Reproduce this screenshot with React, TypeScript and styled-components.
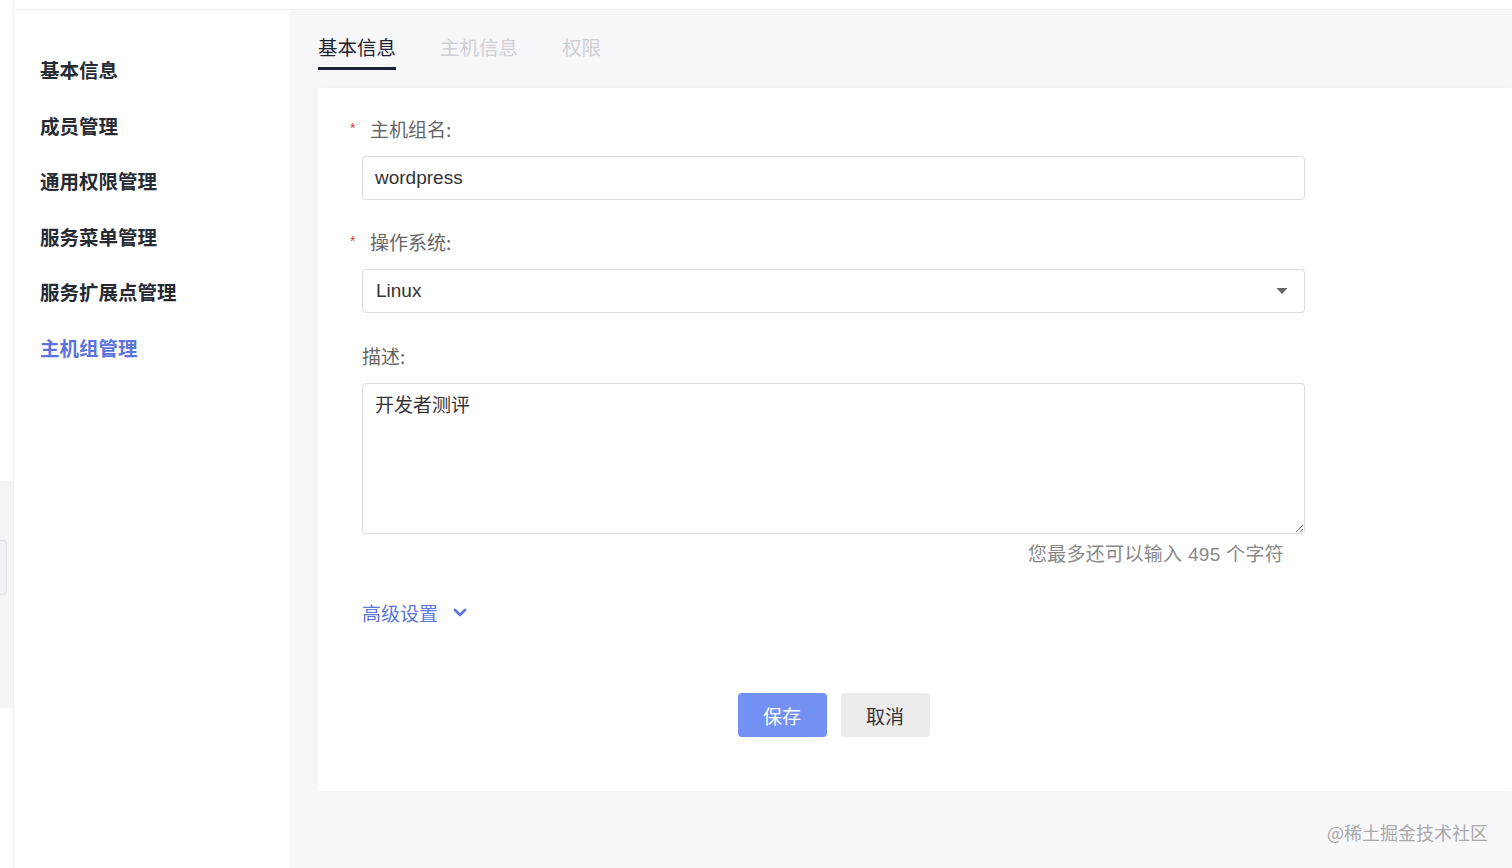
import React, { useState } from 'react';
import styled, { createGlobalStyle, css } from 'styled-components';

const GlobalStyle = createGlobalStyle`
  html, body {
    margin: 0;
    padding: 0;
    height: 100%;
  }
  body {
    font-family: "Liberation Sans", "Noto Sans CJK SC", sans-serif;
    background: #fff;
    color: #333;
  }
  * {
    box-sizing: border-box;
  }
`;

const menuItems = ['基本信息', '成员管理', '通用权限管理', '服务菜单管理', '服务扩展点管理', '主机组管理'];
const tabs = ['基本信息', '主机信息', '权限'];

export default function App() {
  const [desc, setDesc] = useState('开发者测评');

  return (
    <>
      <GlobalStyle />
      <Page>
        <EdgeStrip>
          <EdgeTop />
          <EdgeGrey>
            <EdgeHandle />
          </EdgeGrey>
        </EdgeStrip>
        <Body>
          <TopLine />
          <Columns>
            <Sidebar>
              {menuItems.map(item => (
                <MenuItem key={item} active={item === '主机组管理'}>
                  {item}
                </MenuItem>
              ))}
            </Sidebar>
            <Main>
              <TabBar>
                {tabs.map((tab, i) => (
                  <Tab key={tab} active={i === 0}>
                    {tab}
                  </Tab>
                ))}
              </TabBar>
              <Card>
                <Form>
                  <Label required>
                    <Star>*</Star>主机组名:
                  </Label>
                  <Input defaultValue="wordpress" />

                  <Label required>
                    <Star>*</Star>操作系统:
                  </Label>
                  <Select>
                    <span>Linux</span>
                    <svg width="12" height="8" viewBox="0 0 12 8">
                      <path d="M0.5 1 L11.5 1 L6 7 Z" fill="#666" />
                    </svg>
                  </Select>

                  <Label>描述:</Label>
                  <TextArea value={desc} onChange={e => setDesc(e.target.value)} />
                  <Counter>您最多还可以输入 {500 - desc.length} 个字符</Counter>

                  <Advanced>
                    高级设置
                    <svg width="14" height="10" viewBox="0 0 14 10">
                      <path d="M2 2 L7 7 L12 2" fill="none" stroke="#5b76dc" strokeWidth="2.8" strokeLinecap="round" strokeLinejoin="round" />
                    </svg>
                  </Advanced>

                  <Actions>
                    <Button primary>保存</Button>
                    <Button>取消</Button>
                  </Actions>
                </Form>
              </Card>
              <Watermark>@稀土掘金技术社区</Watermark>
            </Main>
          </Columns>
        </Body>
      </Page>
    </>
  );
}

const Page = styled.div`
  display: flex;
  width: 1512px;
  height: 868px;
  overflow: hidden;
  font-family: "Liberation Sans", "Noto Sans CJK SC", sans-serif;
`;

const EdgeStrip = styled.div`
  width: 14px;
  flex-shrink: 0;
  display: flex;
  flex-direction: column;
  border-right: 1px solid #efeff2;
  background: #fff;
`;

const EdgeTop = styled.div`
  height: 481px;
`;

const EdgeGrey = styled.div`
  height: 227px;
  background: #f4f4f6;
  padding-top: 59px;
`;

const EdgeHandle = styled.div`
  width: 7px;
  height: 55px;
  background: #f0f1f5;
  border: 1px solid #e2e3ea;
  border-left: none;
  border-radius: 0 4px 4px 0;
`;

const Body = styled.div`
  flex: 1;
  display: flex;
  flex-direction: column;
`;

const TopLine = styled.div`
  height: 10px;
  background: #fff;
  border-bottom: 1px solid #f0f0f2;
`;

const Columns = styled.div`
  flex: 1;
  display: flex;
`;

const Sidebar = styled.nav`
  width: 276px;
  flex-shrink: 0;
  background: #fff;
  padding: 32px 0 0 26px;
  display: flex;
  flex-direction: column;
`;

const MenuItem = styled.div<{ active?: boolean }>`
  font-family: "Noto Sans CJK SC", sans-serif;
  font-size: 19.5px;
  font-weight: 700;
  line-height: 55.5px;
  color: #262a33;
  cursor: pointer;
  ${props =>
    props.active &&
    css`
      color: #5b74dc;
    `}
`;

const Main = styled.main`
  flex: 1;
  background: #f7f7f9;
  padding: 0 0 0 28px;
  display: flex;
  flex-direction: column;
`;

const TabBar = styled.div`
  display: flex;
  gap: 44px;
  padding-top: 25px;
`;

const Tab = styled.div<{ active?: boolean }>`
  font-family: "Noto Sans CJK SC", sans-serif;
  font-size: 19.5px;
  line-height: 24px;
  padding-bottom: 8px;
  border-bottom: 3px solid transparent;
  color: #cfcfd4;
  cursor: pointer;
  ${props =>
    props.active &&
    css`
      color: #1f2233;
      border-bottom-color: #1f2233;
    `}
`;

const Card = styled.section`
  margin-top: 18px;
  height: 703px;
  background: #fff;
  box-shadow: 0 -2px 6px rgba(0, 0, 0, 0.025);
  padding: 29px 0 0 44px;
`;

const Form = styled.div`
  width: 943px;
  display: flex;
  flex-direction: column;
`;

const Label = styled.div<{ required?: boolean }>`
  font-family: "Noto Sans CJK SC", sans-serif;
  font-size: 19px;
  line-height: 24px;
  color: #666;
  margin: 0 0 15px;
  display: flex;
  align-items: center;
  ${props =>
    props.required &&
    css`
      margin-left: -12px;
    `}
`;

const Star = styled.span`
  width: 20px;
  color: #e8323c;
  font-size: 14px;
  font-family: "Liberation Sans", sans-serif;
  line-height: 14px;
  align-self: flex-start;
  padding-top: 4px;
`;

const fieldBox = css`
  width: 100%;
  border: 1px solid #dcdcdf;
  border-radius: 4px;
  background: #fff;
  font-family: "Liberation Sans", "Noto Sans CJK SC", sans-serif;
  font-size: 19px;
  color: #333;
`;

const Input = styled.input`
  ${fieldBox};
  height: 44px;
  padding: 0 12px;
  outline: none;
  margin-bottom: 30px;
`;

const Select = styled.div`
  ${fieldBox};
  height: 44px;
  padding: 0 16px 0 13px;
  display: flex;
  align-items: center;
  justify-content: space-between;
  margin-bottom: 31px;
`;

const TextArea = styled.textarea`
  ${fieldBox};
  height: 151px;
  padding: 8px 12px;
  resize: vertical;
  outline: none;
  line-height: 24px;
  font-family: "Noto Sans CJK SC", sans-serif;
`;

const Counter = styled.div`
  align-self: flex-end;
  margin: 9px 21px 0 0;
  font-size: 19px;
  line-height: 24px;
  letter-spacing: 0.3px;
  color: #888;
`;

const Advanced = styled.div`
  margin-top: 34px;
  display: flex;
  align-items: center;
  gap: 15px;
  font-family: "Noto Sans CJK SC", sans-serif;
  font-size: 19px;
  line-height: 24px;
  color: #5b76dc;
  cursor: pointer;
`;

const Actions = styled.div`
  margin-top: 68px;
  display: flex;
  justify-content: center;
  gap: 14px;
`;

const Button = styled.button<{ primary?: boolean }>`
  width: 89px;
  height: 44px;
  border: none;
  border-radius: 4px;
  font-family: "Noto Sans CJK SC", sans-serif;
  font-size: 19px;
  background: #ebebeb;
  color: #333;
  cursor: pointer;
  ${props =>
    props.primary &&
    css`
      background: #7391f2;
      color: #fff;
    `}
`;

const Watermark = styled.div`
  align-self: flex-end;
  margin: 28px 24px 0 0;
  font-family: "Noto Sans CJK SC", sans-serif;
  font-size: 18px;
  color: #a8a8ab;
`;
